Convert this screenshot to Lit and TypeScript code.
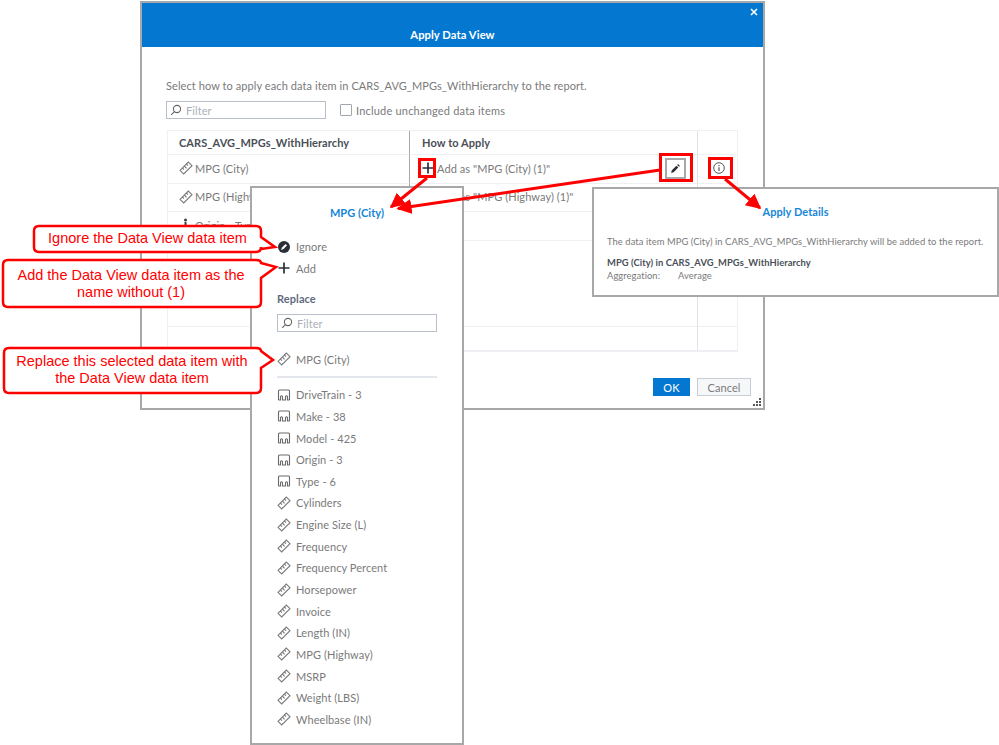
import { LitElement, html, css, svg } from "lit";
import { customElement } from "lit/decorators.js";

const ruler = () => html`<svg class="ic" viewBox="0 0 14 14" width="14" height="14"><g fill="none" stroke="#7a7a7a" stroke-width="1.100"><path d="M1 9.300 9.300 1 13 4.700 4.700 13Z"/><path d="M3.300 7 5 8.700M5.300 5 7.600 7.300M7.300 3 9 4.700"/></g></svg>`;
const cat = () => html`<svg class="ic" viewBox="0 0 14 14" width="14" height="14"><g fill="none" stroke="#6a6a6a" stroke-width="1.100"><path d="M1.500 12V3A1 1 0 0 1 2.500 2H11.500A1 1 0 0 1 12.500 3V12"/><path d="M1.500 12H3.500V8.500Q4.500 7 5.500 8.500V12H8.500V8.500Q9.500 7 10.500 8.500V12H12.500"/></g></svg>`;
const search = () => html`<svg class="sr" viewBox="0 0 12 12" width="12" height="12"><g fill="none" stroke="#666" stroke-width="1.100"><circle cx="7" cy="5" r="3.600"/><path d="M4.400 7.600 1.200 10.800"/></g></svg>`;
const plus = () => html`<svg class="ic" viewBox="0 0 14 14" width="14" height="14"><path d="M7 1.500V12.500M1.500 7H12.500" stroke="#2b2f36" stroke-width="1.700" fill="none"/></svg>`;
const person = () => html`<svg class="ic" viewBox="0 0 14 14" width="14" height="14"><circle cx="6.500" cy="2" r="1.500" fill="#3a3f47"/><path d="M6.500 4V12" stroke="#3a3f47" stroke-width="2"/></svg>`;

const items: [string, boolean][] = [
  ["DriveTrain - 3", true], ["Make - 38", true], ["Model - 425", true], ["Origin - 3", true], ["Type - 6", true],
  ["Cylinders", false], ["Engine Size (L)", false], ["Frequency", false], ["Frequency Percent", false],
  ["Horsepower", false], ["Invoice", false], ["Length (IN)", false], ["MPG (Highway)", false], ["MSRP", false],
  ["Weight (LBS)", false], ["Wheelbase (IN)", false],
];

@customElement("app-root")
export class AppRoot extends LitElement {
  static styles = css`
    :host { display: block; position: relative; width: 999px; height: 745px; overflow: hidden; background: #fff;
      font-family: Lato, "Open Sans", sans-serif; font-size: 11px; letter-spacing: .08px; color: #7a7a7a; }
    .dialog { box-sizing: border-box; width: 625px; height: 409px; margin: 1px 0 0 140px; border: 2px solid #a8a8a8; display: flex; flex-direction: column; background: #fff; position: relative; }
    .head { height: 44px; background: #0478d0; color: #fff; font-weight: 700; font-size: 11.200px; display: flex; justify-content: center; align-items: flex-end; padding-bottom: 6px; box-sizing: border-box; flex: none; }
    .x { position: absolute; right: 5px; top: 5px; }
    .body { padding: 32px 24px 0 24px; display: flex; flex-direction: column; flex: 1; }
    .lead { line-height: 14px; }
    .tools { display: flex; align-items: center; gap: 14px; margin-top: 8px; }
    .filter { box-sizing: border-box; border: 1px solid #b9c0cc; height: 18px; display: flex; align-items: center; gap: 4px; padding-left: 3px; color: #a9afb8; }
    .filter.top { width: 160px; }
    .filter.pop { width: 160px; margin-top: 6px; }
    .check { display: flex; align-items: center; gap: 4px; letter-spacing: .2px; }
    .box { width: 10px; height: 10px; border: 1px solid #a0a6b0; border-radius: 1px; }
    .table { margin-top: 11px; width: 571px; height: 222px; margin-left: 1px; display: grid; grid-template-columns: 242px 288px 39px; grid-template-rows: 24px 29px 28px 29px 86px 24px; border: 1px solid #eef0f3; box-sizing: border-box; }
    .c { box-sizing: border-box; border-bottom: 1px solid #eef0f3; border-right: 1px solid #eef0f3; padding: 0 0 2px 12px; display: flex; align-items: center; gap: 2px; white-space: nowrap; }
    .c.h { font-weight: 700; color: #4a4f57; padding-bottom: 1px; }
    .c.sep { border-right: 1px solid #a8a8a8; padding-left: 11px; }
    .c.sep2 { border-right: 1px solid #dfe2e6; }
    .c.l { border-right: none; padding-left: 15px; }
    .c.tight { padding-left: 11px; }
    .c.h.w { padding-left: 12px; }
    .editb { margin-left: auto; margin-right: 11px; box-sizing: border-box; width: 21px; height: 21px; border: 2px solid #a8a8a8; display: flex; align-items: center; justify-content: center; background: #fff; }
    .btns { margin-top: auto; margin-bottom: 12px; margin-right: -12px; display: flex; justify-content: flex-end; gap: 7px; }
    .btn { box-sizing: border-box; height: 18px; display: flex; align-items: center; justify-content: center; }
    .ok { width: 37px; background: #0478d0; color: #fff; }
    .cancel { width: 54px; background: #f6f7f9; border: 1px solid #c9ced6; }
    .grip { position: absolute; right: 2px; bottom: 2px; }

    .popup { position: absolute; left: 250px; top: 186px; width: 214px; height: 559px; box-sizing: border-box; border: 2px solid #a8a8a8; background: #fff; padding: 17px 25px 0; }
    .ptitle { color: #1586d8; font-weight: 700; text-align: center; line-height: 16px; margin-bottom: 15px; }
    .row { display: flex; align-items: center; gap: 5px; height: 21.650px; white-space: nowrap; }
    .ic { flex: none; }
    .rep { font-weight: 700; color: #5f6b80; margin-top: 11px; line-height: 18px; }
    .cur { margin-top: 16px; }
    hr { border: 0; border-top: 2px solid #e3e6eb; margin: 6px 0 6px; width: 160px; }
    .details { position: absolute; left: 592px; top: 187px; width: 407px; height: 110px; box-sizing: border-box; border: 2px solid #a8a8a8; background: #fff; padding: 15px 13px 0; font-size: 9.400px; letter-spacing: .07px; }
    .dtitle { color: #1586d8; font-weight: 700; font-size: 11px; text-align: center; line-height: 16px; margin-bottom: 15px; }
    .dt { line-height: 13px; }
    .db { font-weight: 700; color: #4a4f57; margin-top: 8px; line-height: 13px; }
    .dk { display: flex; line-height: 13px; }
    .dk span:first-child { width: 71px; }
    .overlay { position: absolute; left: 0; top: 0; pointer-events: none; }
    .call { position: absolute; color: #f00; font-family: "Liberation Sans", Arial, sans-serif; font-size: 14.500px; letter-spacing: 0; line-height: 17px; text-align: center; }
  `;

  render() {
    return html`
      <div class="dialog">
        <div class="head">Apply Data View</div>
        <svg class="x" viewBox="0 0 8 8" width="8" height="8"><path d="M1 1 7 7M7 1 1 7" stroke="#fff" stroke-width="1.600"/></svg>
        <div class="body">
          <div class="lead">Select how to apply each data item in CARS_AVG_MPGs_WithHierarchy to the report.</div>
          <div class="tools">
            <div class="filter top">${search()}Filter</div>
            <div class="check"><span class="box"></span>Include unchanged data items</div>
          </div>
          <div class="table">
            <div class="c h sep">CARS_AVG_MPGs_WithHierarchy</div><div class="c h sep2 w">How to Apply</div><div class="c l"></div>
            <div class="c sep">${ruler()}MPG (City)</div>
            <div class="c sep2 tight">${plus()}Add as "MPG (City) (1)"
              <div class="editb"><svg viewBox="0 0 12 12" width="11" height="11"><path d="M1.200 10.800 2 8 7 3 9 5 4 10ZM7.800 2.200 8.800 1.200 10.800 3.200 9.800 4.200Z" fill="#2b2f36"/></svg></div>
            </div>
            <div class="c l"><svg viewBox="0 0 12 12" width="12" height="12"><circle cx="6" cy="6" r="5.300" fill="none" stroke="#555" stroke-width="1"/><path d="M6 5.200V9M6 3V4.200" stroke="#555" stroke-width="1.200"/></svg></div>
            <div class="c sep">${ruler()}MPG (Highway)</div><div class="c sep2 tight">${plus()}Add as "MPG (Highway) (1)"</div><div class="c l"></div>
            <div class="c sep">${person()}Origin - Type</div><div class="c sep2"></div><div class="c l"></div>
            <div class="c sep"></div><div class="c sep2"></div><div class="c l"></div>
            <div class="c"></div><div class="c sep2"></div><div class="c l"></div>
          </div>
          <div class="btns"><div class="btn ok">OK</div><div class="btn cancel">Cancel</div></div>
        </div>
        <svg class="grip" viewBox="0 0 8 8" width="8" height="8"><path d="M6 0h2v2H6zM3 3h2v2H3zM6 3h2v2H6zM0 6h2v2H0zM3 6h2v2H3zM6 6h2v2H6z" fill="#555"/></svg>
      </div>

      <div class="popup">
        <div class="ptitle">MPG (City)</div>
        <div class="row"><svg class="ic" viewBox="0 0 14 14" width="14" height="14"><circle cx="7" cy="7" r="6" fill="#2b2f36"/><path d="M4 10 5 7.500 8.500 4 10 5.500 6.500 9Z" fill="#fff"/></svg>Ignore</div>
        <div class="row">${plus()}Add</div>
        <div class="rep">Replace</div>
        <div class="filter pop">${search()}Filter</div>
        <div class="row cur">${ruler()}MPG (City)</div>
        <hr />
        ${items.map(([t, isCat]) => html`<div class="row">${isCat ? cat() : ruler()}${t}</div>`)}
      </div>

      <div class="details">
        <div class="dtitle">Apply Details</div>
        <div class="dt">The data item MPG (City) in CARS_AVG_MPGs_WithHierarchy will be added to the report.</div>
        <div class="db">MPG (City) in CARS_AVG_MPGs_WithHierarchy</div>
        <div class="dk"><span>Aggregation:</span><span>Average</span></div>
      </div>

      <svg class="overlay" width="999" height="745" viewBox="0 0 999 745">
        <defs>
          <marker id="a" markerWidth="5" markerHeight="5" refX="4.500" refY="2.500" orient="auto"><path d="M0 0 5 2.500 0 5Z" fill="#f00"/></marker>
        </defs>
        ${svg`
        <g fill="none" stroke="#f00" stroke-width="3">
          <rect x="419.500" y="159.500" width="15" height="17"/>
          <rect x="660.500" y="154.500" width="31" height="26"/>
          <rect x="709.500" y="158.500" width="22" height="19"/>
          <path d="M427 178 391 207" marker-end="url(#a)"/>
          <path d="M660 170 398 208.500" marker-end="url(#a)"/>
          <path d="M725 179 760 208" marker-end="url(#a)"/>
        </g>
        <g fill="#fff" stroke="#f00" stroke-width="2.500">
          <path d="M39 226H256Q261 226 261 231V237L275 247 261 249V247Q261 252 256 252H39Q34 252 34 247V231Q34 226 39 226Z"/>
          <path d="M8 260H256Q261 260 261 263L276 267 261 278V302Q261 307 256 307H8Q3 307 3 302V265Q3 260 8 260Z"/>
          <path d="M9 348H256Q261 348 261 351L273 360 261 368V388Q261 393 256 393H9Q4 393 4 388V353Q4 348 9 348Z"/>
        </g>`}
      </svg>
      <div class="call" style="left:33px;top:230px;width:229px">Ignore the Data View data item</div>
      <div class="call" style="left:1px;top:267px;width:260px">Add the Data View data item as the<br />name without (1)</div>
      <div class="call" style="left:3px;top:353px;width:258px">Replace this selected data item with<br />the Data View data item</div>
    `;
  }
}
